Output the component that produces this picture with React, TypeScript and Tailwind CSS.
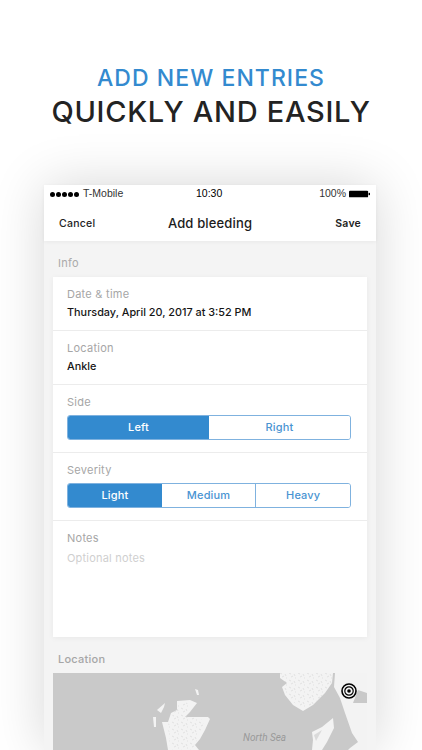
import React from 'react';

const fontMain = { fontFamily: 'Inter, "Liberation Sans", sans-serif' };

const Segmented: React.FC<{ options: string[] }> = ({ options }) => (
  <div className="flex h-[25px] w-[284px] overflow-hidden rounded-[3px] border border-[#7fb2df]">
    {options.map((option, i) => (
      <div
        key={option}
        className={`flex flex-1 items-center justify-center text-[11px] font-medium tracking-[0.15px] ${
          i === 0 ? 'bg-[#338acf] text-white' : 'bg-white text-[#4a94d2]'
        } ${i > 1 ? 'border-l border-[#7fb2df]' : ''}`}
      >
        {option}
      </div>
    ))}
  </div>
);

const Row: React.FC<{ label: string; value: string }> = ({ label, value }) => (
  <div className="h-[54px] border-b border-[#ececec] px-[14px] pt-[10px]">
    <div className="text-[11px] leading-[14px] tracking-[0.25px] text-[#a6a6a6]">{label}</div>
    <div className="mt-[4px] text-[10.85px] font-medium leading-[14px] text-[#151515]">{value}</div>
  </div>
);

const MapView: React.FC = () => (
  <div className="relative h-[77px] w-[314px] overflow-hidden bg-[#c9c9c9]">
    <svg viewBox="53 673 314 77" className="block h-[77px] w-[314px]">
      <defs>
        <pattern id="speck" width="9" height="7" patternUnits="userSpaceOnUse">
          <path d="M1 1l2 1M6 2l1 2M3 5l2 -1M8 6l-1 0" stroke="#dadada" strokeWidth="0.7" fill="none" />
        </pattern>
      </defs>
      <g fill="#f3f3f3">
        {/* Norway */}
        <path d="M280 673L333 673L332 683L325 693L313 705L303 711L293 705L285 695L282 687L287 683L280 678Z" />
        {/* Sweden */}
        <path d="M335 673L367 673L367 750L348 750L350 748L358 742L352 733L345 713L340 698L334 687Z" />
        {/* Denmark */}
        <path d="M312 732L322 727L333 718L334 728L327 742L322 750L312 750L313 740Z" />
        {/* Scotland */}
        <path d="M177 701L190 700L197 703L190 712L185 717L208 717L210 719L205 730L200 739L195 745L199 750L168 750L166 738L162 722L168 722L171 713L177 710Z" />
        <path d="M157 710L165 703L164 707L161 713Z" />
        <path d="M153 717L156 717L156 727L154 727Z" />
        <path d="M195 689L198 690L199 695L197 695Z" />
      </g>
      {/* Baltic */}
      <path d="M353 703L358 690L367 693L367 703Z" fill="#c9c9c9" />
      {/* Terrain speckle */}
      <path d="M280 673L333 673L332 683L325 693L313 705L303 708L293 702L285 692L282 687L287 683L280 678Z" fill="url(#speck)" />
      <path d="M177 705L190 702L186 716L205 720L198 738L192 750L170 750L168 725L174 712Z" fill="url(#speck)" />
      <path d="M314 735L322 730L316 741Z" fill="#c9c9c9" opacity="0.6" />
    </svg>
    <span
      className="absolute left-[190px] top-[59px] text-[10px] leading-[12px] italic text-[#999999]"
      style={{ fontFamily: 'Roboto, sans-serif' }}
    >
      North Sea
    </span>
    <svg viewBox="0 0 16 16" className="absolute left-[288px] top-[10px] h-4 w-4">
      <circle cx="8" cy="8" r="7" fill="#f4f4f4" stroke="#000" strokeWidth="1.6" />
      <circle cx="8" cy="8" r="4.2" fill="none" stroke="#000" strokeWidth="1.2" />
      <circle cx="8" cy="8" r="1.8" fill="#000" />
    </svg>
  </div>
);

export default function App() {
  return (
    <div className="flex h-[750px] w-[422px] flex-col items-center overflow-hidden bg-white" style={fontMain}>
      {/* Header */}
      <div className="h-[185px] w-full pt-[64px] text-center">
        <div className="text-[23px] font-medium leading-[28px] tracking-[1.05px] text-[#338acf]">ADD NEW ENTRIES</div>
        <div className="mt-[3px] text-[29px] font-medium leading-[34px] tracking-[0.7px] text-[#232323]">
          QUICKLY AND EASILY
        </div>
      </div>

      {/* Phone */}
      <div className="mr-[2px] h-[565px] w-[332px] shrink-0 bg-[#f4f4f4] shadow-[0_0_50px_rgba(0,0,0,0.16)]">
        <div className="h-[56px] bg-white shadow-[0_1px_4px_rgba(0,0,0,0.05)]">
          {/* Status bar */}
          <div
            className="relative flex h-[18px] items-center justify-between pl-[6px] pr-[6px] text-[10.5px] text-[#333]"
            style={{ fontFamily: '"Liberation Sans", sans-serif' }}
          >
            <div className="flex items-center">
              <div className="flex gap-[1px]">
                {[0, 1, 2, 3, 4].map((n) => (
                  <span key={n} className="h-[5px] w-[5px] rounded-full bg-black" />
                ))}
              </div>
              <span className="ml-[4px]">T-Mobile</span>
            </div>
            <span className="absolute left-[152px] font-medium text-black">10:30</span>
            <div className="flex items-center">
              <span>100%</span>
              <svg viewBox="0 0 22 8" className="ml-[3px] h-2 w-[21px]">
                <rect x="0" y="0.5" width="20" height="7" rx="1" fill="#000" />
                <rect x="20.5" y="2.8" width="1.5" height="2.4" fill="#000" />
              </svg>
            </div>
          </div>
          {/* Nav bar */}
          <div className="grid h-[38px] grid-cols-[1fr_auto_1fr] items-center px-[15px] pt-[4px]">
            <span className="text-[10.5px] font-medium tracking-[0.25px] text-[#222]">Cancel</span>
            <span className="text-[13px] font-medium tracking-[0.15px] text-[#1c1c1c]">Add bleeding</span>
            <span className="text-right text-[10.5px] font-semibold tracking-[0.2px] text-[#222]">Save</span>
          </div>
        </div>

        <div className="px-[9px]">
          <div className="h-[36px] pl-[5px] pt-[15px] text-[11px] leading-[15px] tracking-[0.25px] text-[#aaaaaa]">Info</div>

          {/* Info card */}
          <div className="h-[360px] w-[314px] bg-white shadow-[0_1px_6px_rgba(0,0,0,0.05)]">
            <Row label="Date & time" value="Thursday, April 20, 2017 at 3:52 PM" />
            <Row label="Location" value="Ankle" />
            <div className="h-[68px] border-b border-[#ececec] px-[14px] pt-[10px]">
              <div className="mb-[6px] text-[11px] leading-[14px] tracking-[0.25px] text-[#a6a6a6]">Side</div>
              <Segmented options={['Left', 'Right']} />
            </div>
            <div className="h-[68px] border-b border-[#ececec] px-[14px] pt-[10px]">
              <div className="mb-[6px] text-[11px] leading-[14px] tracking-[0.25px] text-[#a6a6a6]">Severity</div>
              <Segmented options={['Light', 'Medium', 'Heavy']} />
            </div>
            <div className="px-[14px] pt-[10px]">
              <div className="text-[11px] leading-[14px] tracking-[0.25px] text-[#a6a6a6]">Notes</div>
              <div className="mt-[6px] text-[11px] leading-[14px] tracking-[0.2px] text-[#cfcfcf]">Optional notes</div>
            </div>
          </div>

          <div className="h-[36px] pl-[5px] pt-[15px] text-[11px] font-medium leading-[14px] tracking-[0.25px] text-[#a6a6a6]">
            Location
          </div>
          <MapView />
        </div>
      </div>
    </div>
  );
}
